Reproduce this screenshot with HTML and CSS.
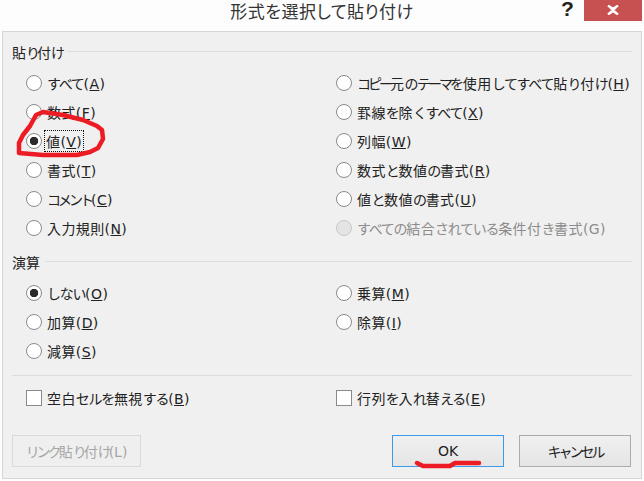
FILE: index.html
```html
<!DOCTYPE html>
<html lang="ja">
<head>
    <meta charset="UTF-8">
    <title>形式を選択して貼り付け</title>
    <link rel="stylesheet" href="styles.css">
</head>
<body>
    <div class="titlebar">
        <h1>形式を選択して貼り付け</h1>
        <span class="help">?</span>
        <span class="close">
            <svg width="12" height="10" viewBox="0 0 12 10"><path d="M1 .5 6 4 11 .5M1 9.5 6 6l5 3.500M1 .5 11 9.500M11 .5 1 9.500" fill="none" stroke="#fff" stroke-width="2.300"/></svg>
        </span>
    </div>

    <div class="panel">
        <div class="legend"><span>貼<b>り</b>付<b>け</b></span></div>
        <div class="options">
            <label class="opt"><input type="radio" name="paste"><span><i>すべて</i>(<u>A</u>)</span></label>
            <label class="opt"><input type="radio" name="paste"><span><b>コピー</b>元<i>の</i><b>テーマ</b><i>を</i>使用<i>してすべて</i>貼<i>り</i>付<i>け</i>(<u>H</u>)</span></label>
            <label class="opt"><input type="radio" name="paste"><span>数式(<u>F</u>)</span></label>
            <label class="opt"><input type="radio" name="paste"><span>罫線<i>を</i>除<i>くすべて</i>(<u>X</u>)</span></label>
            <label class="opt"><input type="radio" name="paste" checked><span class="focused">値(<u>V</u>)</span></label>
            <label class="opt"><input type="radio" name="paste"><span>列幅(<u>W</u>)</span></label>
            <label class="opt"><input type="radio" name="paste"><span>書式(<u>T</u>)</span></label>
            <label class="opt"><input type="radio" name="paste"><span>数式<i>と</i>数値<i>の</i>書式(<u>R</u>)</span></label>
            <label class="opt"><input type="radio" name="paste"><span><b>コメント</b>(<u>C</u>)</span></label>
            <label class="opt"><input type="radio" name="paste"><span>値<i>と</i>数値<i>の</i>書式(<u>U</u>)</span></label>
            <label class="opt"><input type="radio" name="paste"><span>入力規則(<u>N</u>)</span></label>
            <label class="opt disabled"><input type="radio" name="paste" disabled><span><i>すべての</i>結合<i>されている</i>条件付<i>き</i>書式(G)</span></label>
        </div>

        <div class="legend second"><span>演算</span></div>
        <div class="options">
            <label class="opt"><input type="radio" name="calc" checked><span><i>しない</i>(<u>O</u>)</span></label>
            <label class="opt"><input type="radio" name="calc"><span>乗算(<u>M</u>)</span></label>
            <label class="opt"><input type="radio" name="calc"><span>加算(<u>D</u>)</span></label>
            <label class="opt"><input type="radio" name="calc"><span>除算(<u>I</u>)</span></label>
            <label class="opt"><input type="radio" name="calc"><span>減算(<u>S</u>)</span></label>
        </div>

        <hr class="sep">

        <div class="options">
            <label class="opt"><input type="checkbox"><span>空白<i>セルを</i>無視<i>する</i>(<u>B</u>)</span></label>
            <label class="opt"><input type="checkbox"><span>行列<i>を</i>入<i>れ</i>替<i>える</i>(<u>E</u>)</span></label>
        </div>

        <div class="buttons">
            <button class="btn link" disabled><b>リンク</b>貼<b>り</b>付<b>け</b>(L)</button>
            <button class="btn ok">OK</button>
            <button class="btn"><b>キャンセル</b></button>
        </div>
    </div>

    <!-- red pen marks drawn on top of the dialog -->
    <svg class="marks" width="644" height="481" viewBox="0 0 644 481">
        <path d="M63 115 43 112 36 115 30 126 23 135 19 143 19 153 43 155 77 155 90 152 98 148 103 139 102 130 97 126 83 120Z"/>
        <path d="M417 463 423 466 450 466 455 463 479 463"/>
    </svg>
</body>
</html>
```

FILE: styles.css
```css
* {
    box-sizing: border-box;
}
body {
    margin: 0;
    width: 644px;
    height: 481px;
    overflow: hidden;
    background: #fdfdfd;
    color: #222;
    font-family: "DejaVu Sans", "Noto Sans CJK JP", sans-serif;
    font-size: 14px;
    position: relative;
}
/* kana runs are narrower than kanji in the dialog font */
i {
    font-style: normal;
    letter-spacing: -1.300px;
}
b {
    font-weight: normal;
    letter-spacing: -3px;
}
.titlebar {
    height: 31px;
    position: relative;
}
.titlebar h1 {
    margin: 0;
    text-align: center;
    font-size: 17px;
    font-weight: normal;
    font-feature-settings: "palt";
    letter-spacing: 0.500px;
    line-height: 25px;
    color: #333;
}
.help {
    position: absolute;
    left: 561px;
    top: 0;
    font: bold 21px/17px "Liberation Sans", sans-serif;
    color: #222;
}
.close {
    position: absolute;
    left: 584px;
    top: 0;
    width: 58px;
    height: 21px;
    background: #c75050;
    display: flex;
    align-items: center;
    justify-content: center;
    padding-bottom: 2px;
}
.panel {
    margin-left: 2px;
    width: 640px;
    height: 448px;
    background: #f0f0f0;
    border: 1px solid #d6d6d6;
    padding: 10px 9px 0;
}
.legend {
    display: flex;
    align-items: center;
    gap: 5px;
    height: 20px;
}
.legend::after {
    content: "";
    flex: 1;
    height: 1px;
    margin-top: -2px;
    background: #dcdcdc;
}
.legend.second {
    margin-top: 10px;
}
.options {
    display: grid;
    grid-template-columns: 310px 1fr;
    grid-auto-rows: 29px;
    margin-top: 6px;
}
.opt {
    display: flex;
    align-items: center;
    gap: 5px;
    padding-left: 14px;
    white-space: nowrap;
    letter-spacing: 0.400px;
}
.opt input {
    appearance: none;
    margin: 0;
    width: 16px;
    height: 16px;
    flex: none;
    background: #fff;
    border: 1px solid #8a8a8a;
}
.opt input[type="radio"] {
    border-radius: 50%;
}
.opt input:checked {
    background: radial-gradient(circle, #2b2b2b 4px, #fff 4.500px);
}
.opt.disabled {
    color: #8c8c8c;
}
.opt.disabled input {
    background: #e4e4e4;
    border-color: #c8c8c8;
}
.focused {
    outline: 1px dotted #111;
    padding: 0 1px;
    margin-left: -2px;
}
.sep {
    border: 0;
    height: 1px;
    margin: 10px 0 7px;
    background: #dcdcdc;
}
.sep + .options {
    margin-top: 0;
}
.buttons {
    display: flex;
    gap: 15px;
    margin: 23px 1px 0 0;
}
.btn {
    width: 112px;
    height: 32px;
    padding: 0;
    font: inherit;
    color: #222;
    background: linear-gradient(#f0f0f0, #e5e5e5);
    border: 1px solid #acacac;
}
.btn.ok {
    margin-left: auto;
    border-color: #3c9ae8;
}
.btn.link {
    width: 129px;
    color: #a6a6a6;
    background: #efefef;
    border-color: #d9d9d9;
}
.marks {
    position: absolute;
    left: 0;
    top: 0;
    pointer-events: none;
}
.marks path {
    fill: none;
    stroke: #ed1c24;
    stroke-width: 4.500px;
    stroke-linejoin: round;
    stroke-linecap: round;
}
```
